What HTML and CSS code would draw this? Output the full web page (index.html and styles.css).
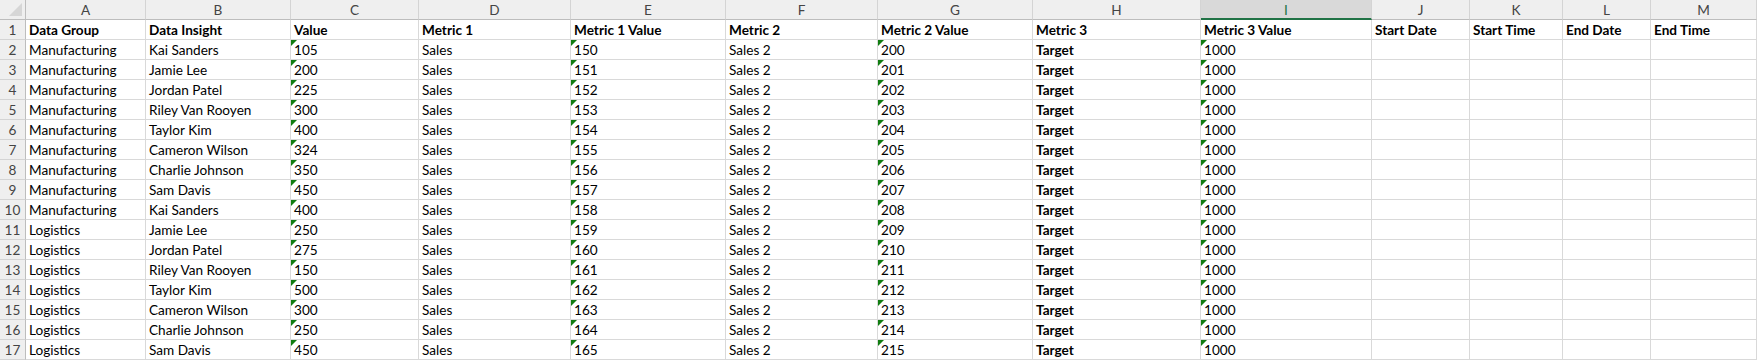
FILE: index.html
```html
<!DOCTYPE html>
<html>
<head>
<meta charset="utf-8">
<link rel="stylesheet" href="styles.css">
</head>
<body>
<div class="sheet">
  <div class="r hdr">
    <div class="c corner"><span class="tri"></span></div>
    <div class="c">A</div><div class="c">B</div><div class="c">C</div><div class="c">D</div><div class="c">E</div><div class="c">F</div><div class="c">G</div><div class="c">H</div><div class="c sel">I</div><div class="c">J</div><div class="c">K</div><div class="c">L</div><div class="c">M</div>
  </div>
  <div class="r b"><div class="c n">1</div><div class="c">Data Group</div><div class="c">Data Insight</div><div class="c">Value</div><div class="c">Metric 1</div><div class="c">Metric 1 Value</div><div class="c">Metric 2</div><div class="c">Metric 2 Value</div><div class="c">Metric 3</div><div class="c">Metric 3 Value</div><div class="c">Start Date</div><div class="c">Start Time</div><div class="c">End Date</div><div class="c">End Time</div></div>
  <div class="r"><div class="c n">2</div><div class="c">Manufacturing</div><div class="c">Kai Sanders</div><div class="c t">105</div><div class="c">Sales</div><div class="c t">150</div><div class="c">Sales 2</div><div class="c t">200</div><div class="c bo">Target</div><div class="c t">1000</div><div class="c"></div><div class="c"></div><div class="c"></div><div class="c"></div></div>
  <div class="r"><div class="c n">3</div><div class="c">Manufacturing</div><div class="c">Jamie Lee</div><div class="c t">200</div><div class="c">Sales</div><div class="c t">151</div><div class="c">Sales 2</div><div class="c t">201</div><div class="c bo">Target</div><div class="c t">1000</div><div class="c"></div><div class="c"></div><div class="c"></div><div class="c"></div></div>
  <div class="r"><div class="c n">4</div><div class="c">Manufacturing</div><div class="c">Jordan Patel</div><div class="c t">225</div><div class="c">Sales</div><div class="c t">152</div><div class="c">Sales 2</div><div class="c t">202</div><div class="c bo">Target</div><div class="c t">1000</div><div class="c"></div><div class="c"></div><div class="c"></div><div class="c"></div></div>
  <div class="r"><div class="c n">5</div><div class="c">Manufacturing</div><div class="c">Riley Van Rooyen</div><div class="c t">300</div><div class="c">Sales</div><div class="c t">153</div><div class="c">Sales 2</div><div class="c t">203</div><div class="c bo">Target</div><div class="c t">1000</div><div class="c"></div><div class="c"></div><div class="c"></div><div class="c"></div></div>
  <div class="r"><div class="c n">6</div><div class="c">Manufacturing</div><div class="c">Taylor Kim</div><div class="c t">400</div><div class="c">Sales</div><div class="c t">154</div><div class="c">Sales 2</div><div class="c t">204</div><div class="c bo">Target</div><div class="c t">1000</div><div class="c"></div><div class="c"></div><div class="c"></div><div class="c"></div></div>
  <div class="r"><div class="c n">7</div><div class="c">Manufacturing</div><div class="c">Cameron Wilson</div><div class="c t">324</div><div class="c">Sales</div><div class="c t">155</div><div class="c">Sales 2</div><div class="c t">205</div><div class="c bo">Target</div><div class="c t">1000</div><div class="c"></div><div class="c"></div><div class="c"></div><div class="c"></div></div>
  <div class="r"><div class="c n">8</div><div class="c">Manufacturing</div><div class="c">Charlie Johnson</div><div class="c t">350</div><div class="c">Sales</div><div class="c t">156</div><div class="c">Sales 2</div><div class="c t">206</div><div class="c bo">Target</div><div class="c t">1000</div><div class="c"></div><div class="c"></div><div class="c"></div><div class="c"></div></div>
  <div class="r"><div class="c n">9</div><div class="c">Manufacturing</div><div class="c">Sam Davis</div><div class="c t">450</div><div class="c">Sales</div><div class="c t">157</div><div class="c">Sales 2</div><div class="c t">207</div><div class="c bo">Target</div><div class="c t">1000</div><div class="c"></div><div class="c"></div><div class="c"></div><div class="c"></div></div>
  <div class="r"><div class="c n">10</div><div class="c">Manufacturing</div><div class="c">Kai Sanders</div><div class="c t">400</div><div class="c">Sales</div><div class="c t">158</div><div class="c">Sales 2</div><div class="c t">208</div><div class="c bo">Target</div><div class="c t">1000</div><div class="c"></div><div class="c"></div><div class="c"></div><div class="c"></div></div>
  <div class="r"><div class="c n">11</div><div class="c">Logistics</div><div class="c">Jamie Lee</div><div class="c t">250</div><div class="c">Sales</div><div class="c t">159</div><div class="c">Sales 2</div><div class="c t">209</div><div class="c bo">Target</div><div class="c t">1000</div><div class="c"></div><div class="c"></div><div class="c"></div><div class="c"></div></div>
  <div class="r"><div class="c n">12</div><div class="c">Logistics</div><div class="c">Jordan Patel</div><div class="c t">275</div><div class="c">Sales</div><div class="c t">160</div><div class="c">Sales 2</div><div class="c t">210</div><div class="c bo">Target</div><div class="c t">1000</div><div class="c"></div><div class="c"></div><div class="c"></div><div class="c"></div></div>
  <div class="r"><div class="c n">13</div><div class="c">Logistics</div><div class="c">Riley Van Rooyen</div><div class="c t">150</div><div class="c">Sales</div><div class="c t">161</div><div class="c">Sales 2</div><div class="c t">211</div><div class="c bo">Target</div><div class="c t">1000</div><div class="c"></div><div class="c"></div><div class="c"></div><div class="c"></div></div>
  <div class="r"><div class="c n">14</div><div class="c">Logistics</div><div class="c">Taylor Kim</div><div class="c t">500</div><div class="c">Sales</div><div class="c t">162</div><div class="c">Sales 2</div><div class="c t">212</div><div class="c bo">Target</div><div class="c t">1000</div><div class="c"></div><div class="c"></div><div class="c"></div><div class="c"></div></div>
  <div class="r"><div class="c n">15</div><div class="c">Logistics</div><div class="c">Cameron Wilson</div><div class="c t">300</div><div class="c">Sales</div><div class="c t">163</div><div class="c">Sales 2</div><div class="c t">213</div><div class="c bo">Target</div><div class="c t">1000</div><div class="c"></div><div class="c"></div><div class="c"></div><div class="c"></div></div>
  <div class="r"><div class="c n">16</div><div class="c">Logistics</div><div class="c">Charlie Johnson</div><div class="c t">250</div><div class="c">Sales</div><div class="c t">164</div><div class="c">Sales 2</div><div class="c t">214</div><div class="c bo">Target</div><div class="c t">1000</div><div class="c"></div><div class="c"></div><div class="c"></div><div class="c"></div></div>
  <div class="r"><div class="c n">17</div><div class="c">Logistics</div><div class="c">Sam Davis</div><div class="c t">450</div><div class="c">Sales</div><div class="c t">165</div><div class="c">Sales 2</div><div class="c t">215</div><div class="c bo">Target</div><div class="c t">1000</div><div class="c"></div><div class="c"></div><div class="c"></div><div class="c"></div></div>
</div>
</body>
</html>
```
FILE: styles.css
```css
* { box-sizing: border-box; }
html, body { margin: 0; padding: 0; background: #fff; overflow: hidden; }
.sheet {
  width: 1757px;
  font-family: Lato, "Liberation Sans", sans-serif;
  font-size: 13.6px;
  color: #000;
}
.r {
  display: grid;
  grid-template-columns: 26px 120px 145px 128px 152px 155px 152px 155px 168px 171px 98px 93px 88px 1fr;
  height: 20px;
}
.c {
  position: relative;
  border-right: 1px solid #d9d9d9;
  border-bottom: 1px solid #d9d9d9;
  padding: 0 2px 0 3px;
  line-height: 21px;
  white-space: nowrap;
  overflow: hidden;
}
.hdr .c {
  background: #efefef;
  color: #444;
  text-align: center;
  font-size: 13.6px;
  border-right: 1px solid #d4d4d4;
  border-bottom: 1px solid #bdbdbd;
  line-height: 20px;
  padding: 0;
}
.hdr .c.sel {
  background: #d9d9d9;
  color: #217346;
  border-bottom: 2px solid #217346;
}
.corner .tri {
  position: absolute;
  right: 3px;
  bottom: 3px;
  width: 0;
  height: 0;
  border-left: 13px solid transparent;
  border-bottom: 13px solid #d6d6d6;
}
.c.n {
  background: #efefef;
  color: #444;
  text-align: center;
  padding: 0;
  line-height: 20px;
  border-right: 1px solid #bdbdbd;
  border-bottom: 1px solid #d4d4d4;
}
.hdr .c.corner { border-right: 1px solid #bdbdbd; }
.b .c:not(.n), .bo { font-weight: bold; }
.t::before {
  content: "";
  position: absolute;
  left: 0;
  top: 0;
  width: 0;
  height: 0;
  border-top: 6px solid #107c10;
  border-right: 6px solid transparent;
}
```
